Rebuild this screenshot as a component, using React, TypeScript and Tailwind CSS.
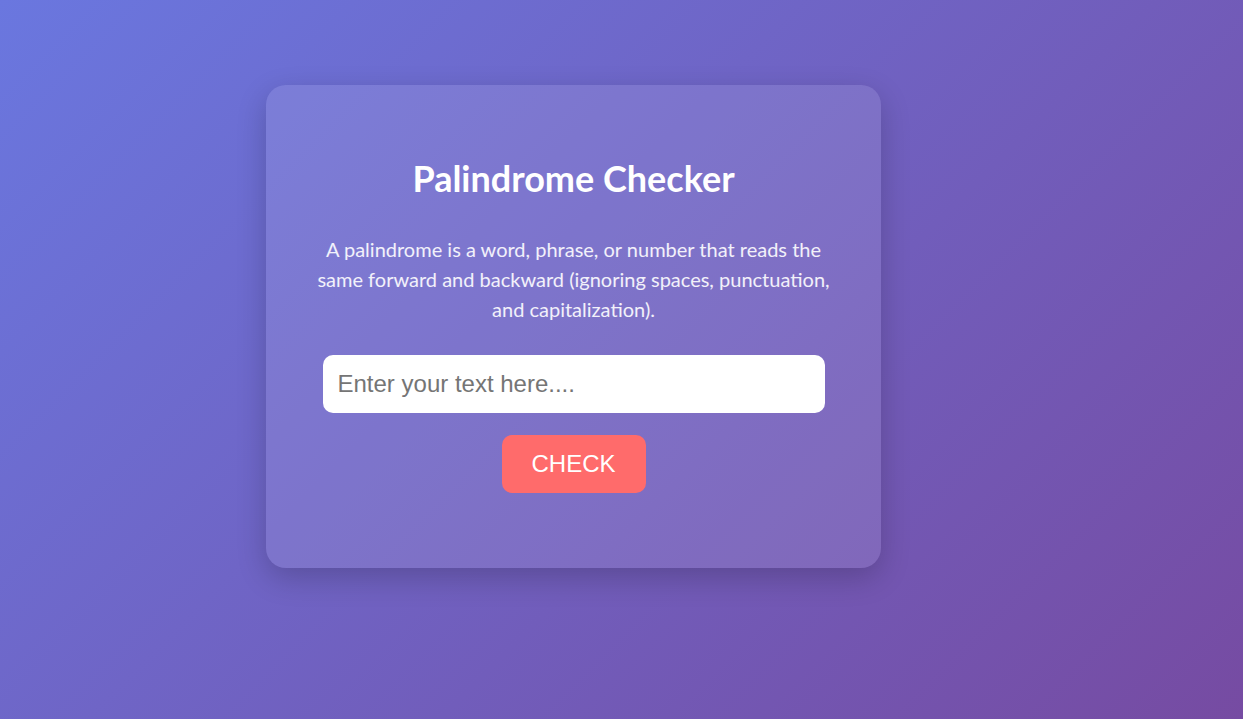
export default function App() {
  return (
    <div className="min-h-[719px] w-full bg-[linear-gradient(135deg,#6a77df_0%,#764ba2_100%)] flex justify-start">
      {/* Card */}
      <div className="ml-[266px] mt-[85px] w-[615px] h-[483px] rounded-[20px] bg-white/10 shadow-[0_10px_30px_rgba(0,0,0,0.2)] flex flex-col items-center pt-[70px] font-['Lato',sans-serif]">
        <h1 className="text-[36px] leading-[46px] font-bold text-white">Palindrome Checker</h1>

        <p className="mt-[33px] w-[535px] text-center text-[20px] leading-[30px] text-white/90">
          A palindrome is a word, phrase, or number that reads the same forward and backward (ignoring spaces, punctuation, and capitalization).
        </p>

        <input
          type="text"
          placeholder="Enter your text here...."
          className="mt-[31px] w-[502px] h-[58px] rounded-[10px] bg-white px-[15px] text-[24px] font-['Liberation_Sans',Arial,sans-serif] text-gray-800 placeholder:text-[#757575] outline-none"
        />

        <button className="mt-[22px] w-[144px] h-[58px] rounded-[10px] bg-[#ff6b6b] text-white text-[24px] font-['Liberation_Sans',Arial,sans-serif]">
          CHECK
        </button>
      </div>
    </div>
  );
}
